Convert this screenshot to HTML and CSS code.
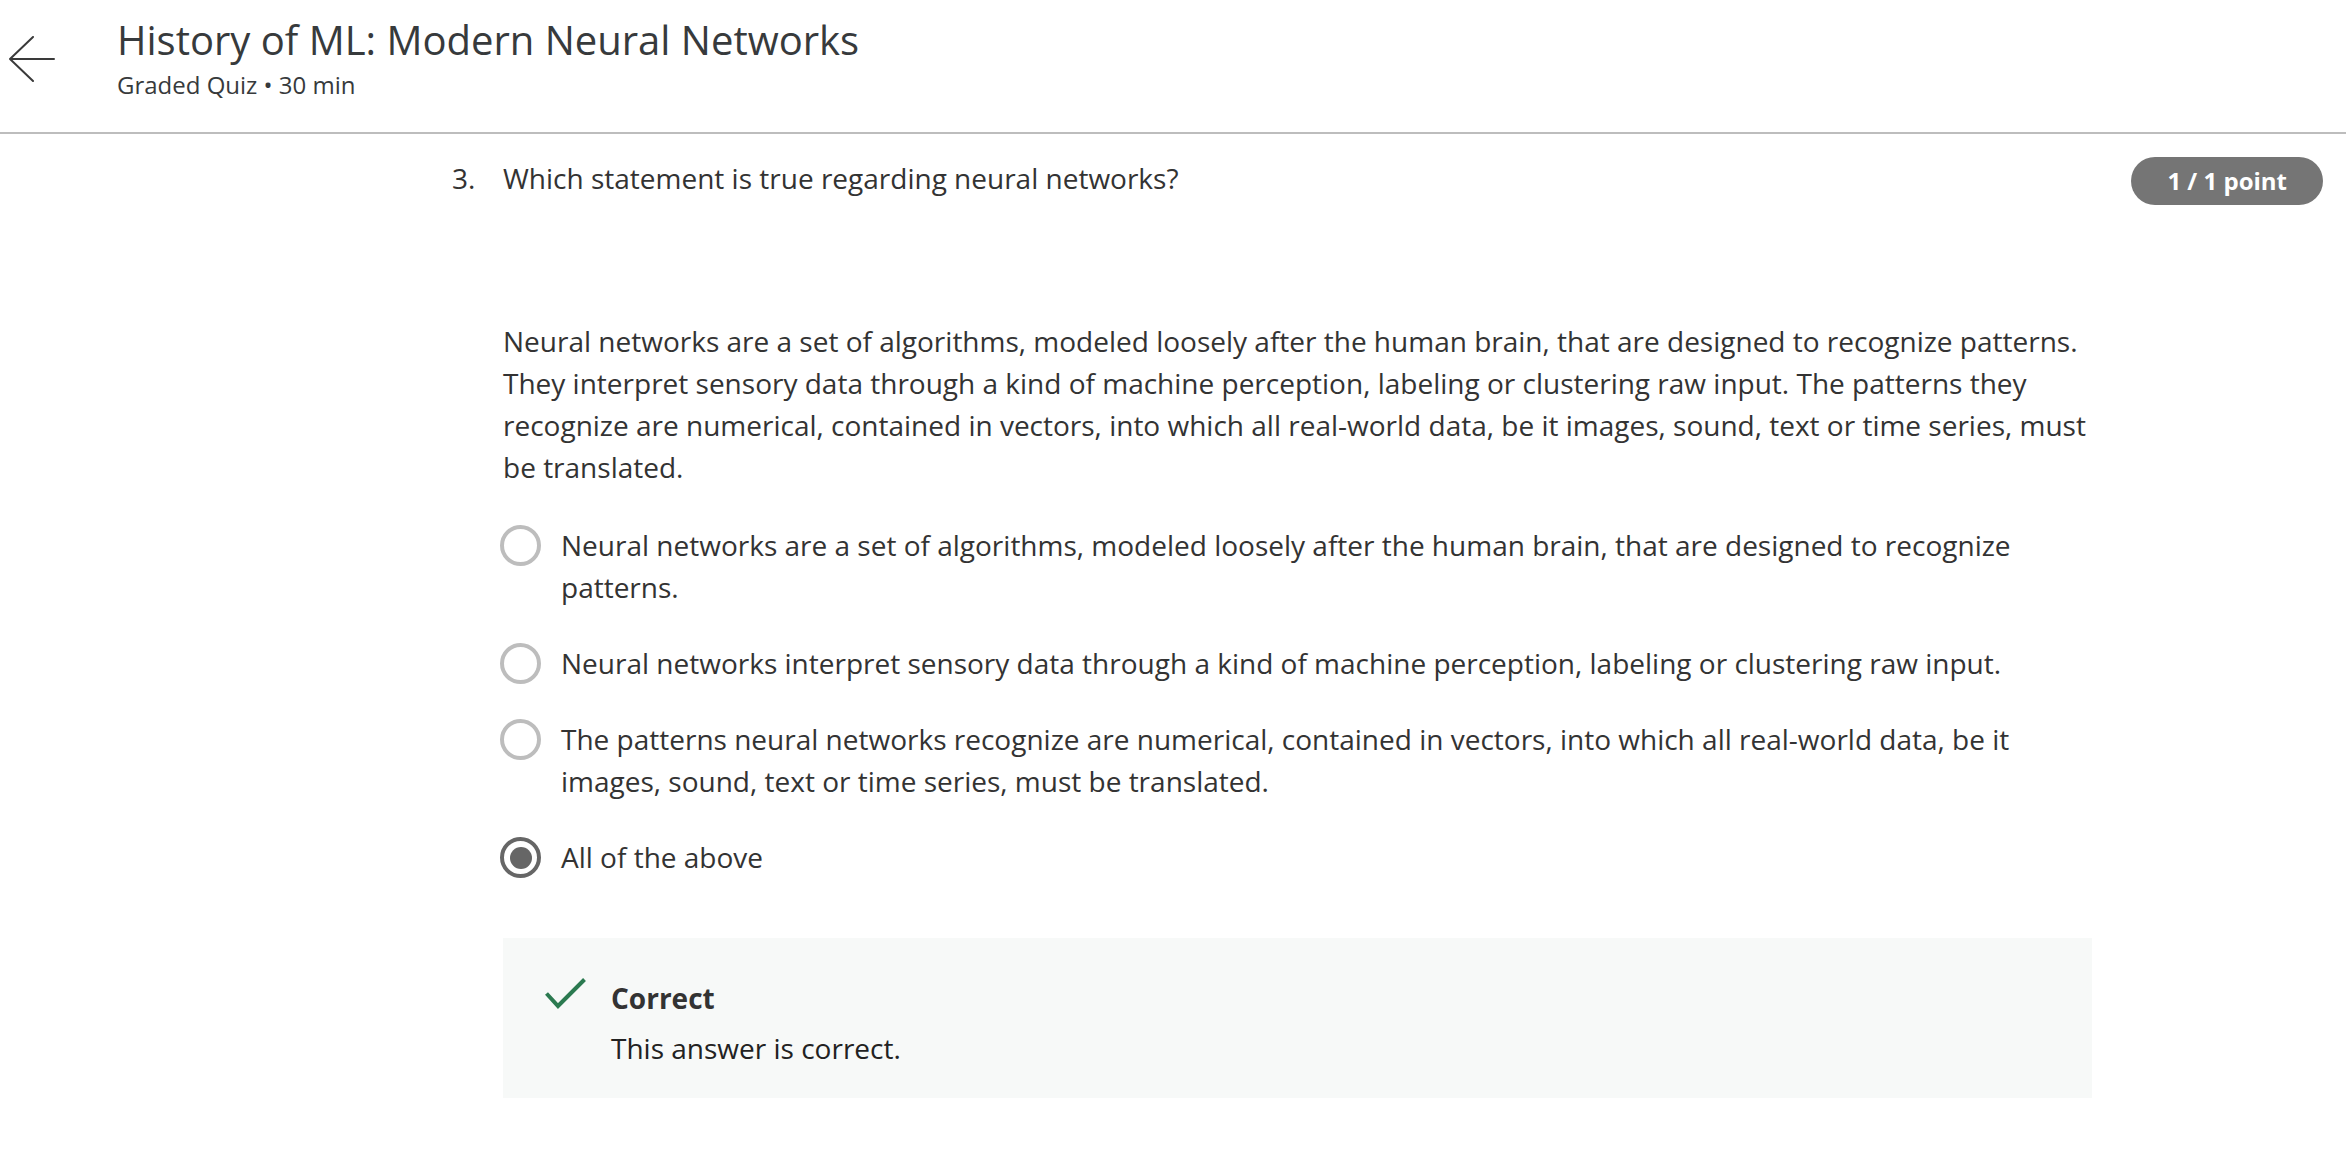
FILE: index.html
```html
<!DOCTYPE html>
<html lang="en">
<head>
<meta charset="utf-8">
<title>History of ML: Modern Neural Networks</title>
<link rel="stylesheet" href="styles.css">
</head>
<body>
<header class="topbar">
  <button class="back" aria-label="Back">
    <svg width="46" height="46" viewBox="0 0 46 46" fill="none" stroke="#3a3a3a" stroke-width="2" stroke-linecap="round" stroke-linejoin="round">
      <path d="M45 23H1M24 1L1 23L24 45"/>
    </svg>
  </button>
  <div class="titles">
    <h1 class="title">History of ML: Modern Neural Networks</h1>
    <div class="subtitle">Graded Quiz • 30 min</div>
  </div>
</header>
<main class="main">
  <div class="question-row">
    <span class="qnum">3.</span>
    <span class="qtext">Which statement is true regarding neural networks?</span>
    <span class="badge">1 / 1 point</span>
  </div>
  <div class="answer">
    <p class="prompt">Neural networks are a set of algorithms, modeled loosely after the human brain, that are designed to recognize patterns. They interpret sensory data through a kind of machine perception, labeling or clustering raw input. The patterns they recognize are numerical, contained in vectors, into which all real-world data, be it images, sound, text or time series, must be translated.</p>
    <ul class="options">
      <li class="option"><span class="radio"></span><span class="opt-text">Neural networks are a set of algorithms, modeled loosely after the human brain, that are designed to recognize patterns.</span></li>
      <li class="option"><span class="radio"></span><span class="opt-text">Neural networks interpret sensory data through a kind of machine perception, labeling or clustering raw input.</span></li>
      <li class="option"><span class="radio"></span><span class="opt-text">The patterns neural networks recognize are numerical, contained in vectors, into which all real-world data, be it images, sound, text or time series, must be translated.</span></li>
      <li class="option"><span class="radio checked"></span><span class="opt-text">All of the above</span></li>
    </ul>
    <div class="feedback">
      <svg class="check" width="41" height="31" viewBox="0 0 41 31" fill="none" stroke="#2b7a50" stroke-width="4">
        <path d="M1.5 15.5L13 28L39.5 1.5"/>
      </svg>
      <div class="fb-text">
        <div class="fb-title">Correct</div>
        <div class="fb-desc">This answer is correct.</div>
      </div>
    </div>
  </div>
</main>
</body>
</html>
```

FILE: styles.css
```css
* { box-sizing: border-box; }
html, body { margin: 0; padding: 0; background: #fff; }
body {
  font-family: "Open Sans", "Noto Sans", sans-serif;
  color: #333;
}
.topbar {
  display: flex;
  align-items: center;
  height: 134px;
  padding: 18px 0 32px 9px;
  border-bottom: 2px solid #bdbdbd;
}
.back {
  width: 46px;
  height: 46px;
  padding: 0;
  border: 0;
  background: none;
  margin-right: 62px;
  display: flex;
}
.titles { display: flex; flex-direction: column; }
.title {
  margin: 0;
  font-size: 40px;
  line-height: 48px;
  font-weight: 400;
  color: #373a3c;
}
.subtitle {
  margin-top: 3px;
  font-size: 24px;
  line-height: 36px;
  color: #373a3c;
}
.main {
  padding: 23px 23px 40px 452px;
}
.question-row {
  display: flex;
  align-items: flex-start;
  height: 48px;
}
.qnum {
  width: 51px;
  font-size: 28px;
  line-height: 42px;
}
.qtext {
  flex: 1;
  font-size: 28px;
  line-height: 42px;
}
.badge {
  height: 48px;
  padding: 0 36px;
  border-radius: 24px;
  background: #757575;
  color: #fff;
  font-weight: 700;
  font-size: 24px;
  line-height: 48px;
  white-space: nowrap;
}
.answer {
  margin-left: 51px;
  width: 1589px;
}
.prompt {
  margin: 115px 0 0;
  font-size: 28px;
  line-height: 42px;
}
.options {
  list-style: none;
  margin: 36px 0 0;
  padding: 0;
  display: flex;
  flex-direction: column;
  gap: 34px;
}
.option {
  display: flex;
  align-items: flex-start;
  font-size: 28px;
  line-height: 42px;
}
.radio {
  flex: none;
  width: 41px;
  height: 41px;
  margin-top: 1px;
  margin-left: -3px;
  margin-right: 20px;
  border: 4px solid #bdbdbd;
  border-radius: 50%;
  position: relative;
}
.radio.checked {
  border-color: #666;
}
.radio.checked::after {
  content: "";
  position: absolute;
  left: 5.5px;
  top: 5.5px;
  width: 22px;
  height: 22px;
  border-radius: 50%;
  background: #666;
}
.opt-text { flex: 1; }
.feedback {
  margin-top: 60px;
  background: #f7f9f8;
  padding: 39px 42px 29px;
  display: flex;
  align-items: flex-start;
}
.check { flex: none; margin-top: 1px; margin-right: 25px; }
.fb-title {
  font-size: 28px;
  line-height: 42px;
  font-weight: 700;
  color: #333;
}
.fb-desc {
  margin-top: 8px;
  font-size: 28px;
  line-height: 42px;
  color: #222;
}
```
